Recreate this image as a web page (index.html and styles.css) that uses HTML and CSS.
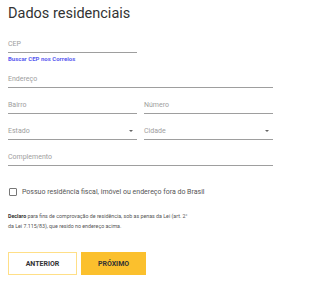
FILE: index.html
```html
<!DOCTYPE html>
<html lang="pt-BR">
<head>
<meta charset="utf-8">
<link rel="stylesheet" href="styles.css">
</head>
<body>
<div class="form">
  <h1 class="title">Dados residenciais</h1>
  <div class="field half">CEP</div>
  <a class="link" href="#">Buscar CEP nos Correios</a>
  <div class="field full first">Endereço</div>
  <div class="row">
    <div class="field">Bairro</div>
    <div class="field">Número</div>
  </div>
  <div class="row">
    <div class="field select">Estado<span class="caret"></span></div>
    <div class="field select">Cidade<span class="caret"></span></div>
  </div>
  <div class="field full gap">Complemento</div>
  <label class="check"><span class="box"></span>Possuo residência fiscal, imóvel ou endereço fora do Brasil</label>
  <p class="declare"><b>Declaro</b> para fins de comprovação de residência, sob as penas da Lei (art. 2°<br>da Lei 7.115/83), que resido no endereço acima.</p>
  <div class="buttons">
    <button class="btn outline">ANTERIOR</button>
    <button class="btn primary">PRÓXIMO</button>
  </div>
</div>
</body>
</html>
```
FILE: styles.css
```css
html, body {
  margin: 0;
  padding: 0;
  background: #ffffff;
}
body {
  font-family: Roboto, "Liberation Sans", sans-serif;
}
.form {
  width: 265px;
  padding: 4px 8px;
}
.title {
  margin: 0;
  font-size: 14.5px;
  line-height: 20px;
  font-weight: 400;
  color: #333333;
}
.field {
  box-sizing: border-box;
  height: 14px;
  font-size: 7px;
  line-height: 10px;
  color: #9e9e9e;
  padding-bottom: 3px;
  border-bottom: 1px solid #9e9e9e;
  display: flex;
  justify-content: space-between;
  align-items: center;
}
.half {
  width: 129px;
  margin-top: 15px;
}
.link {
  display: block;
  margin-top: 2px;
  font-size: 6px;
  line-height: 8px;
  font-weight: 700;
  color: #5b5bf0;
  text-decoration: none;
}
.first {
  margin-top: 11px;
}
.row {
  display: grid;
  grid-template-columns: 1fr 1fr;
  column-gap: 7px;
  margin-top: 12px;
}
.gap {
  margin-top: 12px;
}
.caret {
  width: 0;
  height: 0;
  margin-right: 4px;
  border-left: 2px solid transparent;
  border-right: 2px solid transparent;
  border-top: 2px solid #666666;
}
.check {
  display: flex;
  align-items: center;
  gap: 5px;
  margin-top: 21px;
  font-size: 7px;
  line-height: 10px;
  color: #555555;
}
.box {
  box-sizing: border-box;
  width: 8px;
  height: 8px;
  margin-left: 1px;
  border: 1px solid #777777;
  border-radius: 1px;
}
.declare {
  margin: 14px 0 0;
  font-size: 5.3px;
  line-height: 10px;
  color: #555555;
}
.declare b {
  color: #333333;
}
.buttons {
  display: flex;
  gap: 4px;
  margin-top: 21px;
}
.btn {
  box-sizing: border-box;
  height: 23px;
  font-family: Roboto, "Liberation Sans", sans-serif;
  font-size: 7px;
  font-weight: 700;
  color: #333333;
  cursor: pointer;
  padding: 0;
}
.outline {
  width: 69px;
  background: #ffffff;
  border: 1.5px solid #ffdf87;
}
.primary {
  width: 65px;
  background: #fbc02d;
  border: 1px solid #fbc02d;
}
```
